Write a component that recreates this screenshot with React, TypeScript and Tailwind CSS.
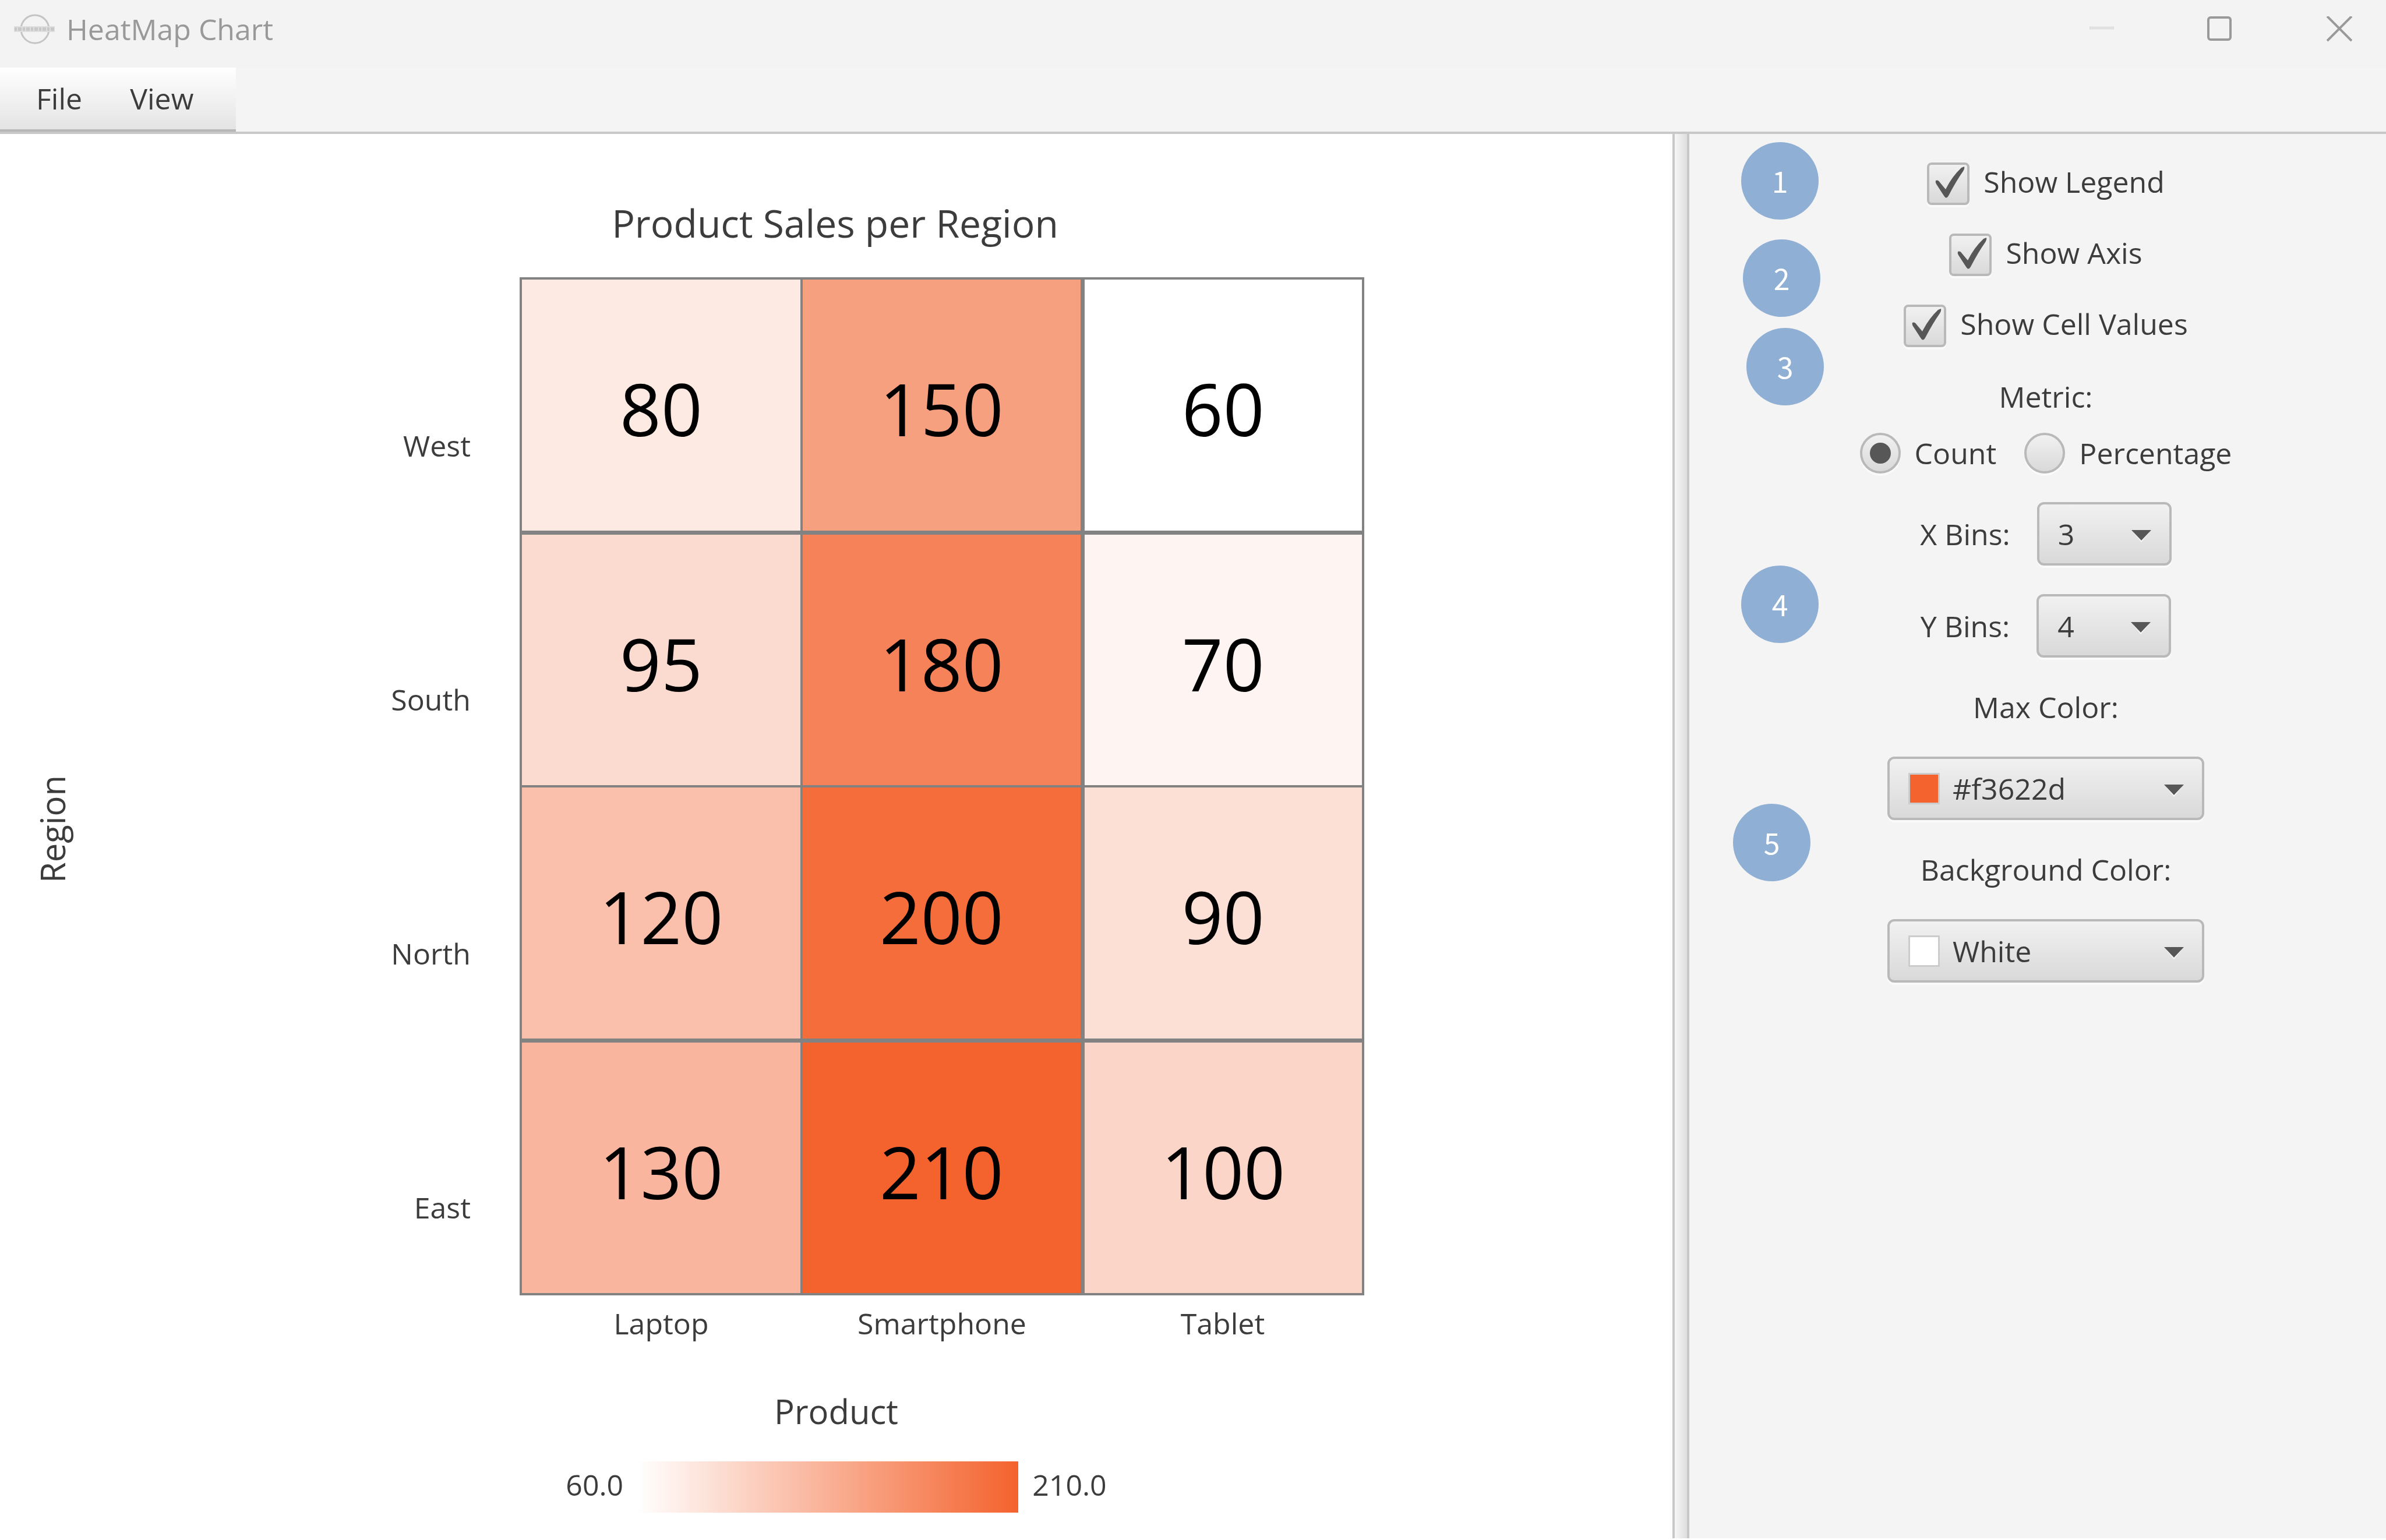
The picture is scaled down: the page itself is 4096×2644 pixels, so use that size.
/**
 * HeatMap chart window - chart on the left, chart options on the right
 */
import { useState } from 'react';
import type { ReactNode } from 'react';

const MIN_VALUE = 60;
const MAX_VALUE = 210;

const COLUMNS = ['Laptop', 'Smartphone', 'Tablet'];

// colors are interpolated between the background color and the max color
const ROWS = [
  { region: 'West', values: [80, 150, 60], colors: ['bg-[#fdeae3]', 'bg-[#f6a07f]', 'bg-white'] },
  { region: 'South', values: [95, 180, 70], colors: ['bg-[#fbdacf]', 'bg-[#f58258]', 'bg-[#fef4f1]'] },
  { region: 'North', values: [120, 200, 90], colors: ['bg-[#fac0ac]', 'bg-[#f46d3b]', 'bg-[#fcdfd5]'] },
  { region: 'East', values: [130, 210, 100], colors: ['bg-[#f9b59e]', 'bg-[#f4622d]', 'bg-[#fbd5c8]'] },
];

const BADGES = [
  { label: '1', place: 'left-[89px] top-[14px]' },
  { label: '2', place: 'left-[92px] top-[181px]' },
  { label: '3', place: 'left-[98px] top-[333px]' },
  { label: '4', place: 'left-[89px] top-[741px]' },
  { label: '5', place: 'left-[75px] top-[1150px]' },
];

const CONTROL = 'border-4 border-[#b9b9b9] bg-linear-to-b from-[#f1f1f1] to-[#d9d9d9]';

function TitleBar() {
  return (
    <header className="flex h-[116px] items-center bg-[#f3f3f3] pb-4 pl-6 text-[#999999]">
      <svg viewBox="0 0 70 54" className="h-[54px] w-[70px]" fill="none" stroke="#c4c4c4">
        <circle cx="36" cy="27" r="24" strokeWidth="3" />
        <rect x="0" y="22" width="70" height="10" fill="#dedede" stroke="none" />
        <path d="M1 27h68" stroke="#c8c8c8" strokeWidth="6" strokeDasharray="4 2 6 2" />
      </svg>
      <h1 className="ml-5 flex-1">HeatMap Chart</h1>
      <button aria-label="Minimize" className="mr-[158px]">
        <svg viewBox="0 0 44 44" className="size-11">
          <path d="M1 20h42" stroke="#e0e0e0" strokeWidth="5" />
        </svg>
      </button>
      <button aria-label="Maximize" className="mr-[162px]">
        <svg viewBox="0 0 44 44" className="size-11">
          <rect x="3" y="2" width="38" height="38" rx="4" fill="none" stroke="#999999" strokeWidth="4" />
        </svg>
      </button>
      <button aria-label="Close" className="mr-[58px]">
        <svg viewBox="0 0 44 44" className="size-11">
          <path d="M1 0l42 42M43 0L1 42" stroke="#999999" strokeWidth="4" />
        </svg>
      </button>
    </header>
  );
}

function MenuBar() {
  return (
    <nav className="flex h-[114px] border-b-4 border-[#c8c8c8] bg-[#f4f4f4]">
      <div className="flex w-[405px] items-center gap-[82px] border-b-4 border-[#b7b7b7] bg-linear-to-b from-white to-[#e4e4e4] pl-[62px]">
        <button>File</button>
        <button>View</button>
      </div>
    </nav>
  );
}

function HeatMap({ showAxis, showValues }: { showAxis: boolean; showValues: boolean }) {
  return (
    <table className="w-full table-fixed border-collapse">
      <colgroup>
        <col className="w-[710px]" />
        <col />
        <col />
        <col />
      </colgroup>
      <tbody>
        {ROWS.map((row, y) => (
          <tr key={row.region} className="h-[436px]">
            <th scope="row" className="pt-[138px] pr-[84px] text-right font-normal">
              {showAxis && row.region}
            </th>
            {row.values.map((value, x) => (
              <td
                key={x}
                className={`border-4 border-[#828282] pt-3 text-center text-[124px] leading-none text-black ${row.colors[x]} ${
                  y % 2 === 0 ? 'border-b-[7px]' : ''
                } ${x === 1 ? 'border-r-[7px]' : ''}`}
              >
                {showValues && value}
              </td>
            ))}
          </tr>
        ))}
      </tbody>
      <tfoot>
        <tr>
          <td />
          {COLUMNS.map((name) => (
            <th key={name} scope="col" className="pt-3 font-normal">
              {showAxis && name}
            </th>
          ))}
        </tr>
      </tfoot>
    </table>
  );
}

function CheckOption({ checked, onChange, children }: { checked: boolean; onChange: (v: boolean) => void; children: ReactNode }) {
  return (
    <label className="flex h-[73px] items-center gap-6">
      <span className="relative size-[73px]">
        <input
          type="checkbox"
          checked={checked}
          onChange={(e) => onChange(e.target.checked)}
          className={`block size-full appearance-none rounded-lg shadow-[0_4px_0_#fafafa] ${CONTROL}`}
        />
        {checked && (
          <svg viewBox="0 0 73 73" className="pointer-events-none absolute inset-0 size-full">
            <path d="M15 31 Q19 29 22 34 L32 46 Q43 24 59 9 L64 7 Q65 10 62 15 Q50 32 37 57 Q33 64 29 57 L16 37 Q14 34 15 31Z" fill="#575757" />
          </svg>
        )}
      </span>
      <span className="-mt-2">{children}</span>
    </label>
  );
}

function RadioOption({ checked, onSelect, children }: { checked: boolean; onSelect: () => void; children: ReactNode }) {
  return (
    <label className="flex h-[70px] items-center gap-6">
      <span className="relative grid size-[70px] place-items-center">
        <input
          type="radio"
          name="metric"
          checked={checked}
          onChange={onSelect}
          className={`col-start-1 row-start-1 size-full appearance-none rounded-full shadow-[0_4px_0_#fafafa] ${CONTROL}`}
        />
        {checked && <span className="pointer-events-none z-10 col-start-1 row-start-1 size-9 rounded-full bg-[#575757]" />}
      </span>
      <span>{children}</span>
    </label>
  );
}

function Arrow() {
  return (
    <svg viewBox="0 0 36 22" className="pointer-events-none absolute top-1/2 right-[34px] h-[22px] w-9 -translate-y-2">
      <path d="M5 6h26L18 22z" fill="#fafafa" />
      <path d="M1 1h34L18 19z" fill="#575757" />
    </svg>
  );
}

function BinSelect({ id, label, initial }: { id: string; label: string; initial: number }) {
  return (
    <div className="flex items-center gap-[46px]">
      <label htmlFor={id}>{label}</label>
      <div className="relative">
        <select
          id={id}
          defaultValue={initial}
          className={`block h-[109px] w-[231px] appearance-none rounded-xl pl-8 shadow-[0_4px_0_#fafafa] ${CONTROL}`}
        >
          {[1, 2, 3, 4, 5].map((n) => (
            <option key={n}>{n}</option>
          ))}
        </select>
        <Arrow />
      </div>
    </div>
  );
}

function ColorSelect({ id, value, swatch }: { id: string; value: string; swatch: string }) {
  return (
    <div className="relative">
      <select
        id={id}
        defaultValue={value}
        className={`block h-[109px] w-[544px] appearance-none rounded-xl pl-[108px] shadow-[0_4px_0_#fafafa] ${CONTROL}`}
      >
        <option>{value}</option>
      </select>
      <span className={`pointer-events-none absolute top-7 left-9 size-[54px] border-3 border-[#cccccc] ${swatch}`} />
      <Arrow />
    </div>
  );
}

export default function App() {
  const [showLegend, setShowLegend] = useState(true);
  const [showAxis, setShowAxis] = useState(true);
  const [showValues, setShowValues] = useState(true);
  const [metric, setMetric] = useState('count');

  return (
    <div className="flex min-h-screen flex-col bg-white pb-[3px] font-['Open_Sans','Noto_Sans',sans-serif] text-[50px] leading-[72px] text-[#3c3c3c]">
      <TitleBar />
      <MenuBar />

      <main className="flex flex-1">
        {/* chart */}
        <section className="flex flex-1 flex-col pt-[107px]">
          <h2 className="mb-[49px] pr-1 text-center text-[66px] leading-[90px]">Product Sales per Region</h2>
          <div className="flex">
            <div className="flex w-[184px] justify-center pt-16 pr-1">
              {showAxis && <span className="rotate-180 text-center text-[58px] [writing-mode:vertical-rl]">Region</span>}
            </div>
            <div className="mr-[529px] flex-1">
              <HeatMap showAxis={showAxis} showValues={showValues} />
            </div>
          </div>
          <p className="mt-[73px] text-center text-[58px] leading-[84px]">Product</p>
          {showLegend && (
            <div className="mt-11 flex items-center justify-center gap-6">
              <span className="pb-2">{MIN_VALUE.toFixed(1)}</span>
              <div className="h-[88px] w-[654px] bg-linear-to-r/srgb from-white to-[#f4622d]" />
              <span className="pb-2">{MAX_VALUE.toFixed(1)}</span>
            </div>
          )}
        </section>

        {/* split pane divider */}
        <div className="w-[29px] border-x-4 border-[#c8c8c8] bg-linear-to-r from-[#f6f6f6] to-[#dedede]" />

        {/* options */}
        <aside className="relative flex w-[1196px] flex-col items-center gap-[49px] bg-[#f4f4f4] pt-[49px] pl-7">
          <CheckOption checked={showLegend} onChange={setShowLegend}>Show Legend</CheckOption>
          <CheckOption checked={showAxis} onChange={setShowAxis}>Show Axis</CheckOption>
          <CheckOption checked={showValues} onChange={setShowValues}>Show Cell Values</CheckOption>

          <fieldset>
            <legend className="mx-auto mb-[26px]">Metric:</legend>
            <div className="flex gap-12">
              <RadioOption checked={metric === 'count'} onSelect={() => setMetric('count')}>Count</RadioOption>
              <RadioOption checked={metric === 'percentage'} onSelect={() => setMetric('percentage')}>Percentage</RadioOption>
            </div>
          </fieldset>

          <BinSelect id="x-bins" label="X Bins:" initial={3} />
          <BinSelect id="y-bins" label="Y Bins:" initial={4} />

          <label htmlFor="max-color">Max Color:</label>
          <ColorSelect id="max-color" value="#f3622d" swatch="bg-[#f4622d]" />
          <label htmlFor="background-color">Background Color:</label>
          <ColorSelect id="background-color" value="White" swatch="bg-white" />

          {BADGES.map((badge) => (
            <span
              key={badge.label}
              className={`absolute grid size-[133px] place-items-center rounded-full bg-[#90afd4] pb-1 font-['Noto_Sans_CJK_SC',sans-serif] text-white ${badge.place}`}
            >
              {badge.label}
            </span>
          ))}
        </aside>
      </main>
    </div>
  );
}
